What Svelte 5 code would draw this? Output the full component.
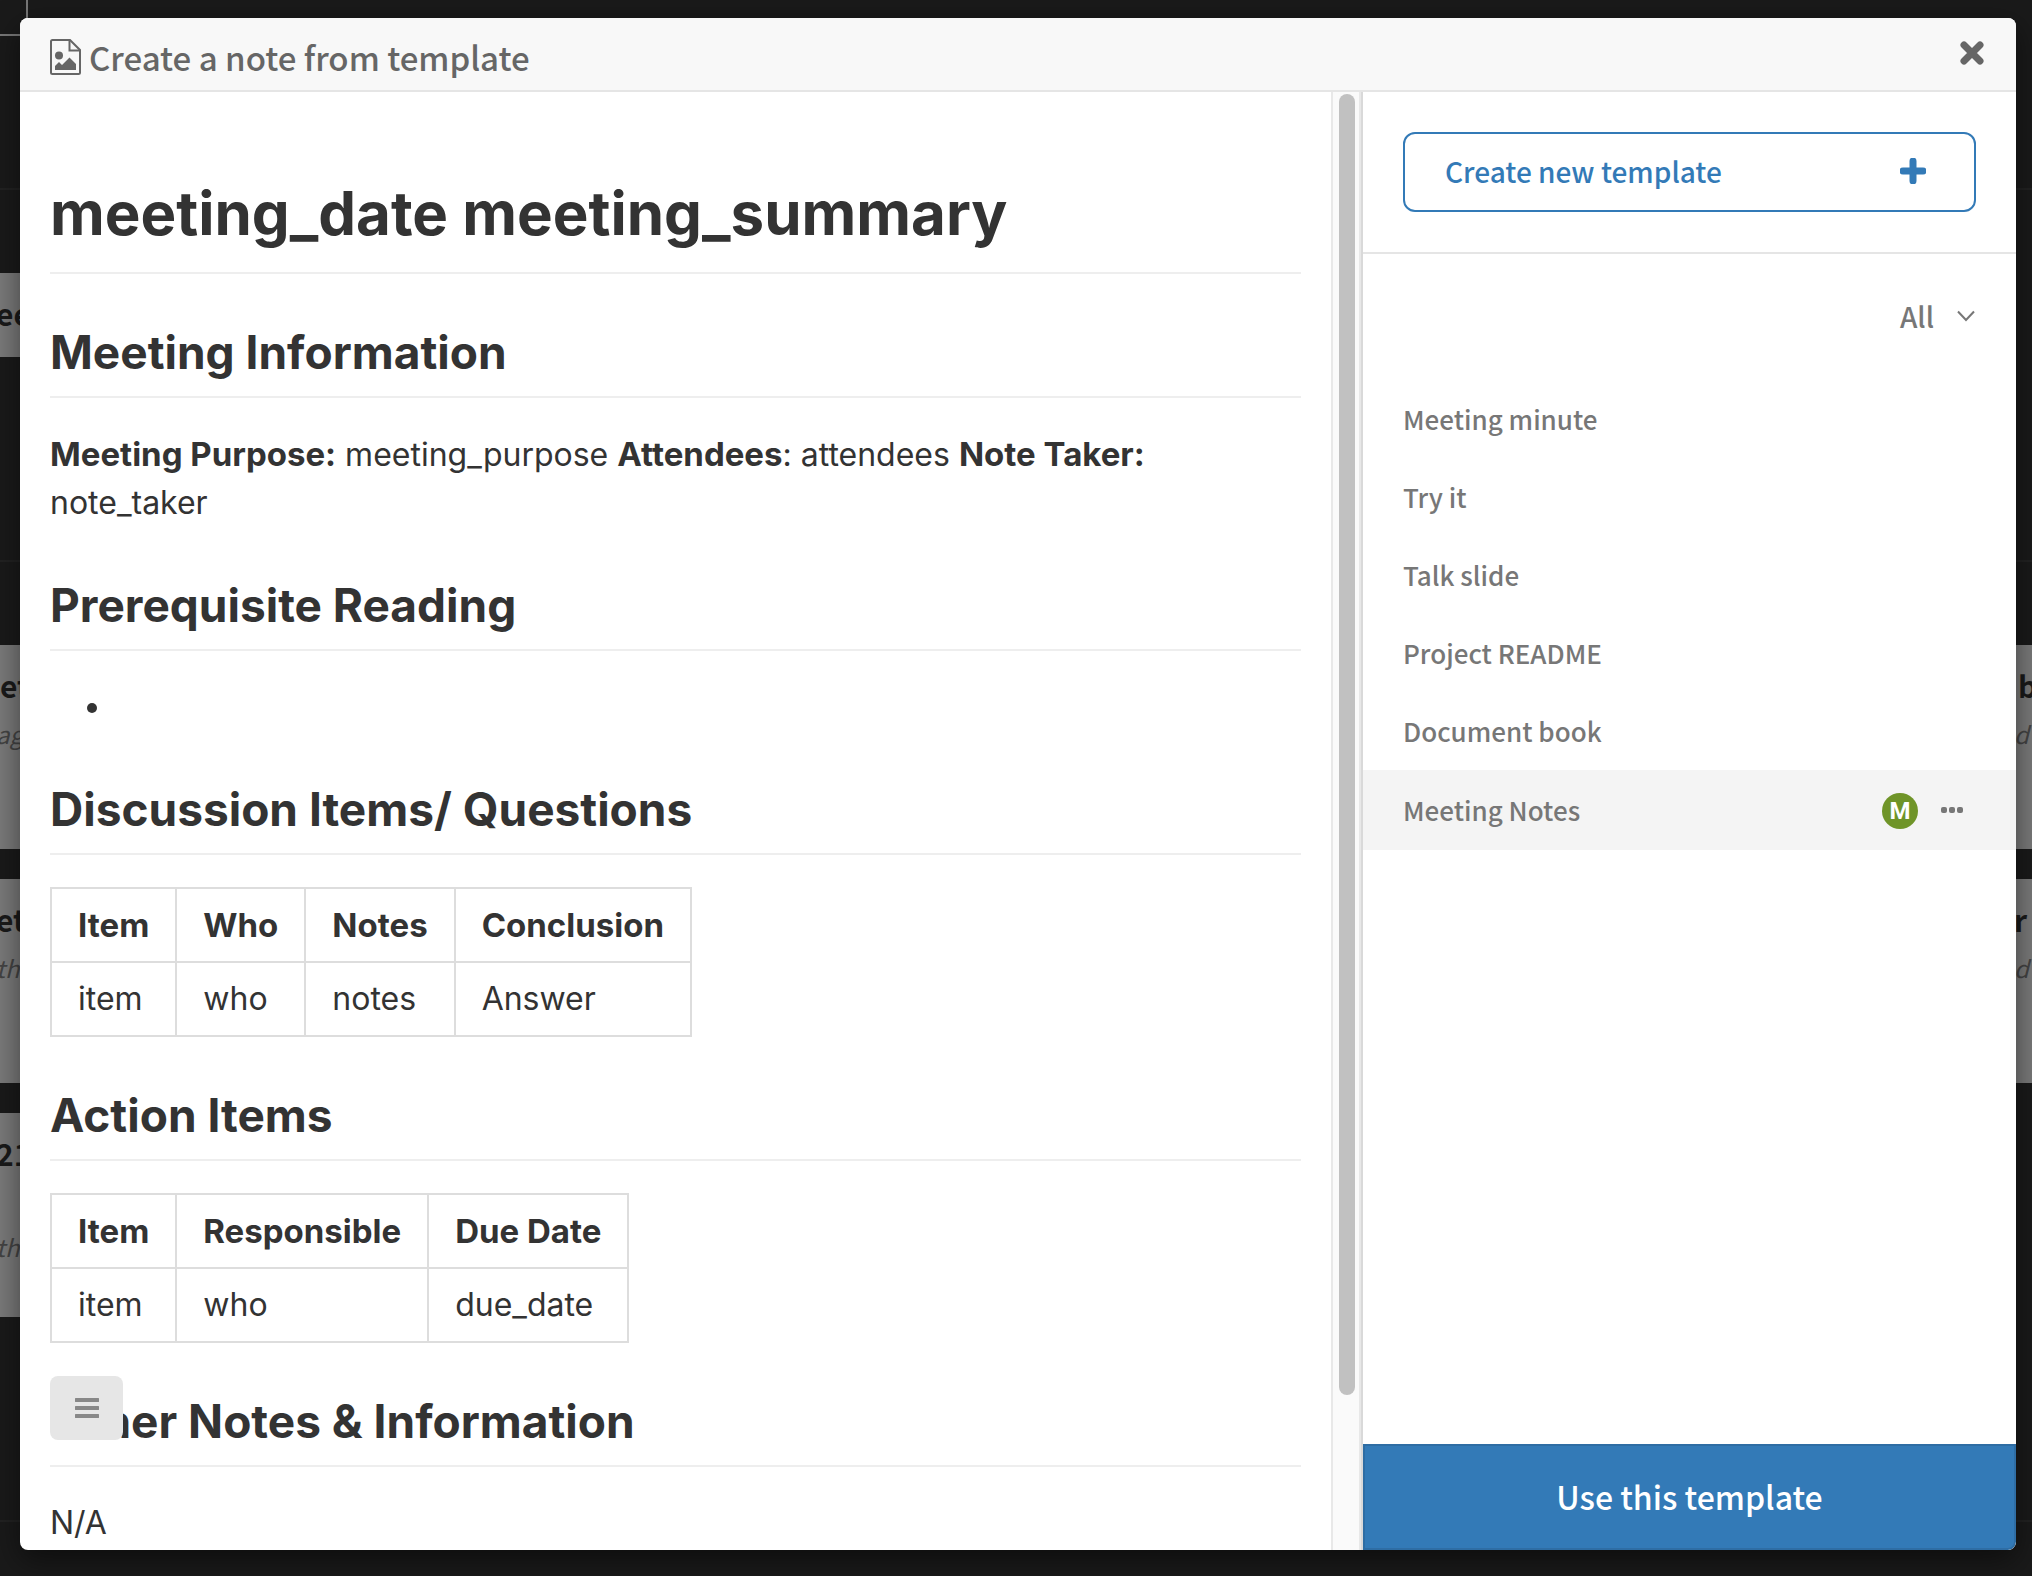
<script>
  const templates = ['Meeting minute', 'Try it', 'Talk slide', 'Project README', 'Document book', 'Meeting Notes'];
  let selected = $state('Meeting Notes');
  const tables = {
    discussion: { head: ['Item', 'Who', 'Notes', 'Conclusion'], row: ['item', 'who', 'notes', 'Answer'] },
    actions: { head: ['Item', 'Responsible', 'Due Date'], row: ['item', 'who', 'due_date'] }
  };
</script>

{#snippet grid(t)}
  <table>
    <thead><tr>{#each t.head as h}<th scope="col">{h}</th>{/each}</tr></thead>
    <tbody><tr>{#each t.row as c}<td>{c}</td>{/each}</tr></tbody>
  </table>
{/snippet}

<div class="screen">
  <div class="behind" aria-hidden="true">
    <div class="nav"><div class="tab"></div></div>
    <div class="band first"><div class="card short"><b class="title tucked">ee</b></div></div>
    <div class="band second">
      <div class="card"><b class="title">et</b><i class="ago tucked">ag</i><b class="title end">b</b><i class="ago end tucked">d .</i></div>
      <div class="card"><b class="title tucked">et</b><i class="ago tucked">ths</i><b class="title end tucked">r l</b><i class="ago end tucked">d .</i></div>
      <div class="card left"><b class="title tucked">21</b><i class="ago low tucked">ths</i></div>
    </div>
    <div class="band third"></div>
  </div>

  <div class="modal" role="dialog" aria-labelledby="dialog-title">
    <header>
      <svg class="file" viewBox="0 0 31 36" aria-hidden="true">
        <path d="M2.500 1H20L30 11V33.500Q30 35 28.500 35H2.500Q1 35 1 33.500V2.500Q1 1 2.500 1Z" fill="none" stroke="currentColor" stroke-width="2" />
        <path d="M19.500 1V11.500H30" fill="none" stroke="currentColor" stroke-width="2" />
        <circle cx="9" cy="16.500" r="4" fill="currentColor" />
        <path d="M5 31V27L9 23L12 26L19.500 18.500L26 25V31Z" fill="currentColor" />
      </svg>
      <h4 id="dialog-title">Create a note from template</h4>
      <button class="close" aria-label="Close">
        <svg viewBox="0 0 28 28"><path d="M6 6L22 22M22 6L6 22" stroke="currentColor" stroke-width="7" stroke-linecap="round" /></svg>
      </button>
    </header>

    <div class="body">
      <div class="preview">
        <article>
          <h1>meeting_date meeting_summary</h1>
          <h2>Meeting Information</h2>
          <p><strong>Meeting Purpose:</strong> meeting_purpose <strong>Attendees</strong>: attendees <strong>Note Taker:</strong> note_taker</p>
          <h2>Prerequisite Reading</h2>
          <ul><li></li></ul>
          <h2>Discussion Items/ Questions</h2>
          {@render grid(tables.discussion)}
          <h2>Action Items</h2>
          {@render grid(tables.actions)}
          <h2>Other Notes &amp; Information</h2>
          <p>N/A</p>
        </article>
        <div class="track"><div class="thumb"></div></div>
        <button class="toc" aria-label="Table of contents">
          <svg viewBox="0 0 24 20"><path d="M1 2H23M1 10H23M1 18H23" stroke="currentColor" stroke-width="4" stroke-linecap="round" /></svg>
        </button>
      </div>

      <aside>
        <div class="create">
          <button>
            <span>Create new template</span>
            <svg viewBox="0 0 26 26"><path d="M13 3V23M3 13H23" stroke="currentColor" stroke-width="7" stroke-linecap="round" /></svg>
          </button>
        </div>
        <div class="filter">
          <button>
            <span>All</span>
            <svg viewBox="0 0 20 12"><path d="M2 1.500L10 10L18 1.500" fill="none" stroke="currentColor" stroke-width="2" /></svg>
          </button>
        </div>
        <ul class="list">
          {#each templates as name}
            <li class:selected={name === selected}>
              <button class="name" onclick={() => (selected = name)}>{name}</button>
              {#if name === selected}
                <span class="avatar">M</span>
                <button class="more" aria-label="More actions">
                  <svg viewBox="0 0 24 6"><rect x="1" width="6" height="6" rx="2" /><rect x="9" width="6" height="6" rx="2" /><rect x="17" width="6" height="6" rx="2" /></svg>
                </button>
              {/if}
            </li>
          {/each}
        </ul>
        <button class="use">Use this template</button>
      </aside>
    </div>
  </div>
</div>

<style>
  :global(body) { margin: 0; background: #1a1a1a; }
  * { box-sizing: border-box; }
  button { font: inherit; color: inherit; background: none; border: 0; padding: 0; cursor: pointer; }
  svg { display: block; }

  .screen {
    position: relative;
    height: 100vh;
    padding: 18px 16px 26px 20px;
    overflow: hidden;
    background: #1a1a1a;
    font-family: "Noto Sans CJK TC", "Source Sans Pro", sans-serif;
    font-weight: 500;
    color: #777;
  }

  .behind { position: absolute; inset: 0; color: #1a1a1a; }
  .nav { height: 190px; border-bottom: 2px solid #222; }
  .tab { width: 28px; height: 36px; border: solid #777; border-width: 0 2px 2px 0; }
  .band { display: flex; flex-direction: column; gap: 30px; border-bottom: 2px solid #222; }
  .first { height: 372px; padding-top: 83px; }
  .second { height: 960px; padding-top: 83px; }
  .third { border: 0; }
  .card {
    display: grid;
    grid-template-columns: 1fr 14px;
    grid-template-rows: 80px 1fr;
    height: 204px;
    background: #7b7b7b;
    white-space: nowrap;
  }
  .short { height: 84px; width: 50%; }
  .left { width: 50%; }
  .title { grid-area: 1 / 1; font-size: 30px; line-height: 80px; }
  .ago { grid-area: 2 / 1; font-size: 24px; line-height: 18px; font-weight: 400; color: #444; }
  .end { grid-column: 2; }
  .tucked { margin-left: -4px; }
  .low { padding-top: 45px; }

  .modal {
    position: relative;
    display: flex;
    flex-direction: column;
    height: 100%;
    overflow: hidden;
    border-radius: 8px;
    background: #fff;
    box-shadow: 0 10px 30px rgba(0, 0, 0, 0.5);
  }
  header {
    display: flex;
    align-items: flex-start;
    gap: 8px;
    flex: none;
    height: 74px;
    padding: 15px 30px 0;
    background: #f8f8f8;
    border-bottom: 2px solid #e5e5e5;
    color: #666;
  }
  .file { width: 31px; height: 36px; margin-top: 6px; }
  h4 { margin: 0; flex: 1; font-size: 33px; font-weight: 500; line-height: 48px; }
  .close { margin-top: 6px; }
  .close svg { width: 28px; height: 28px; }

  .body { display: flex; flex: 1; min-height: 0; }
  .preview { position: relative; display: flex; flex: 1; min-width: 0; border-right: 2px solid #d9d9d9; }
  article {
    flex: 1;
    padding: 80px 30px 0;
    overflow: hidden;
    font: 32px/48px Inter, "Liberation Sans", sans-serif;
    color: #333;
  }
  article h1, article h2 { margin: 48px 0 32px; font-weight: 700; border-bottom: 2px solid #eee; }
  article h1 { margin-top: 0; font-size: 60px; line-height: 82px; padding-bottom: 18px; }
  article h2 { font-size: 46px; line-height: 60px; padding-bottom: 14px; }
  article p { margin: 0; }
  strong, th { font-size: 33px; font-weight: 700; }
  article ul { margin: 0; padding-left: 64px; }
  li { min-height: 48px; }
  table { border-collapse: collapse; }
  th, td { border: 2px solid #ddd; padding: 12px 26px; text-align: left; }
  .track { flex: none; width: 30px; padding: 2px 4px 2px 6px; background: #fafafa; border: solid #e8e8e8; border-width: 0 2px; }
  .thumb { width: 16px; height: 89.5%; border-radius: 8px; background: #c1c1c1; }
  .toc {
    position: absolute;
    left: 30px;
    bottom: 110px;
    display: grid;
    place-items: center;
    width: 73px;
    height: 64px;
    border-radius: 8px;
    background: #e6e6e6;
    color: #888;
  }
  .toc svg { width: 24px; height: 20px; }

  aside { display: flex; flex-direction: column; flex: none; width: 653px; }
  .create { padding: 40px; border-bottom: 2px solid #e5e5e5; }
  .create button {
    display: flex;
    align-items: center;
    justify-content: space-between;
    width: 100%;
    height: 80px;
    padding: 0 48px 2px 40px;
    border: 2px solid #337ab7;
    border-radius: 12px;
    color: #337ab7;
    font-size: 28px;
  }
  .create svg { width: 26px; height: 26px; }
  .filter { display: flex; justify-content: flex-end; padding: 38px 40px 40px; }
  .filter button { display: flex; align-items: center; gap: 22px; font-size: 28px; line-height: 48px; }
  .filter svg { width: 20px; height: 12px; }
  .list { flex: 1; margin: 0; padding: 0; list-style: none; }
  .list li { display: flex; align-items: center; height: 78px; padding: 0 52px 0 40px; }
  .list .selected { height: 80px; background: #f4f4f4; }
  .name { flex: 1; text-align: left; font-size: 26px; line-height: 40px; }
  .avatar {
    width: 36px;
    height: 36px;
    margin: 2px 22px 0 0;
    border-radius: 50%;
    background: #6f9428;
    color: #fff;
    font: 700 24px/36px Roboto, sans-serif;
    text-align: center;
  }
  .more svg { width: 24px; height: 6px; fill: #777; }
  .use {
    height: 106px;
    padding-bottom: 2px;
    border: 2px solid #2e6da4;
    border-radius: 0 0 8px 0;
    background: #337ab7;
    color: #fff;
    font-size: 32px;
  }
</style>
